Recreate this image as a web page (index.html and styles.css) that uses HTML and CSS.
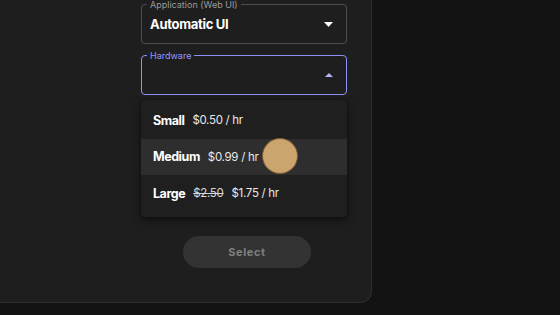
FILE: index.html
```html
<!DOCTYPE html>
<html>
<head>
<meta charset="utf-8">
<link rel="stylesheet" href="styles.css">
</head>
<body>
<div class="panel">
  <div class="form">
    <div class="field">
      <span class="label">Application (Web UI)</span>
      <span class="value">Automatic UI</span>
      <svg class="arrow" width="9" height="5" viewBox="0 0 9 5"><path d="M0 0 L9 0 L4.5 5 Z" fill="#ffffff"/></svg>
    </div>
    <div class="field focused">
      <span class="label">Hardware</span>
      <span class="value"></span>
      <svg class="arrow" width="8" height="4" viewBox="0 0 8 4"><path d="M0 4 L8 4 L4 0 Z" fill="#b4b6f0"/></svg>
    </div>
    <ul class="menu">
      <li class="item"><b>Small</b><span>$0.50 / hr</span></li>
      <li class="item active"><b>Medium</b><span>$0.99 / hr</span></li>
      <li class="item"><b>Large</b><s>$2.50</s><span>$1.75 / hr</span></li>
    </ul>
    <div class="actions"><button class="select">Select</button></div>
  </div>
</div>
<div class="cursor"></div>
</body>
</html>
```
FILE: styles.css
```css
html, body {
  margin: 0;
  padding: 0;
  background: #131313;
  width: 560px;
  height: 315px;
  overflow: hidden;
  font-family: "Inter", "Lato", sans-serif;
}
.panel {
  width: 372px;
  height: 303px;
  background: #1e1e1e;
  border-right: 1px solid #2f2f2f;
  border-bottom: 1px solid #2f2f2f;
  border-bottom-right-radius: 12px;
  box-sizing: border-box;
  padding: 4px 0 0 141px;
}
.form {
  width: 206px;
  display: flex;
  flex-direction: column;
}
.field {
  position: relative;
  height: 40px;
  border: 1px solid #4d4d4d;
  border-radius: 4px;
  box-sizing: border-box;
  display: flex;
  align-items: center;
  padding: 0 13px 0 8px;
}
.field.focused {
  margin-top: 11px;
  border: 1.5px solid #8f92f5;
}
.label {
  position: absolute;
  top: -6px;
  left: 5px;
  padding: 0 3px;
  background: #1e1e1e;
  font-size: 9px;
  line-height: 11px;
  color: #9b9b9b;
}
.focused .label {
  color: #9396ff;
}
.value {
  flex: 1;
  font-size: 13px;
  font-weight: 700;
  color: #ffffff;
  letter-spacing: -0.3px;
}
.arrow {
  display: block;
}
.menu {
  list-style: none;
  margin: 5px 0 0;
  padding: 2px 0 5px;
  background: #1f1f1f;
  border-radius: 4px;
  box-shadow: 0 3px 8px rgba(0,0,0,0.5), 0 0 2px rgba(0,0,0,0.4);
}
.item {
  height: 36.5px;
  display: flex;
  align-items: center;
  gap: 8px;
  padding: 0 12px;
  font-size: 11.5px;
  color: #e8e8e8;
}
.item b {
  font-size: 12.5px;
  font-weight: 700;
  color: #ffffff;
  letter-spacing: -0.45px;
}
.item span, .item s {
  letter-spacing: -0.3px;
}
.item s {
  color: #d8d8d8;
}
.item.active {
  background: #2e2e2e;
}
.actions {
  display: flex;
  justify-content: center;
  padding-left: 6px;
  margin-top: 19px;
}
.select {
  width: 128px;
  height: 32px;
  border: none;
  border-radius: 16px;
  background: #333333;
  color: #7f7f7f;
  font-family: "Inter", sans-serif;
  font-size: 11px;
  font-weight: 700;
  letter-spacing: 0.6px;
}
.cursor {
  position: absolute;
  left: 262px;
  top: 138px;
  width: 36px;
  height: 36px;
  border-radius: 50%;
  background: #cca46d;
  box-sizing: border-box;
  border: 1.5px solid #7a5c36;
}
```
